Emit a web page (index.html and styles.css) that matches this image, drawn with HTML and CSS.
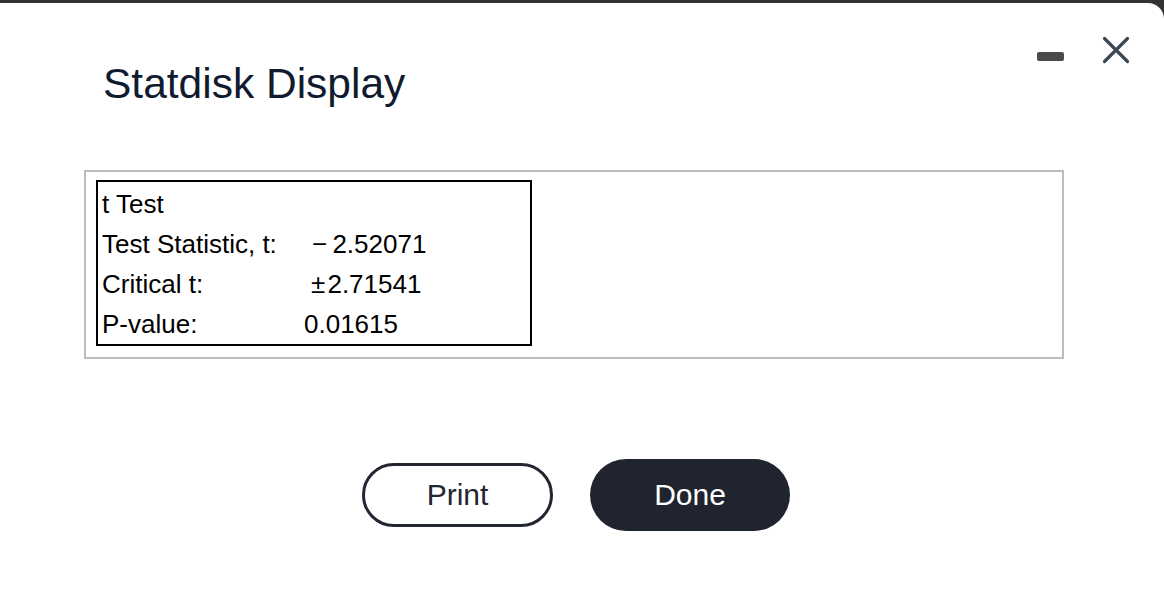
FILE: index.html
```html
<!DOCTYPE html>
<html>
<head>
<meta charset="utf-8">
<title>Statdisk Display</title>
<link rel="stylesheet" href="styles.css">
</head>
<body>
<div class="dialog">
  <div class="header">
    <h1 class="title">Statdisk Display</h1>
    <div class="controls">
      <span class="minimize"></span>
      <svg class="close" width="28" height="28" viewBox="0 0 28 28" aria-label="Close">
        <path d="M2.5 2.5 L25.5 25.5 M25.5 2.5 L2.5 25.5" stroke="#3b4756" stroke-width="3.2" stroke-linecap="round" fill="none"/>
      </svg>
    </div>
  </div>
  <div class="output">
    <div class="results">
      <div class="row"><span class="label">t Test</span><span class="value"></span></div>
      <div class="row"><span class="label">Test Statistic, t:</span><span class="value neg">−&#8201;2.52071</span></div>
      <div class="row"><span class="label">Critical t:</span><span class="value pm">±&#8202;2.71541</span></div>
      <div class="row"><span class="label">P-value:</span><span class="value">0.01615</span></div>
    </div>
  </div>
  <div class="footer">
    <button class="btn btn-outline">Print</button>
    <button class="btn btn-solid">Done</button>
  </div>
</div>
</body>
</html>
```

FILE: styles.css
```css
html, body {
  margin: 0;
  padding: 0;
  height: 100%;
}
body {
  background: #333333;
  font-family: "Liberation Sans", Arial, sans-serif;
  overflow: hidden;
}
.dialog {
  margin-top: 3px;
  height: 593px;
  background: #ffffff;
  border-top-right-radius: 16px;
  display: flex;
  flex-direction: column;
}
.header {
  display: flex;
  justify-content: space-between;
  align-items: flex-start;
  padding: 33px 34px 0 103px;
}
.title {
  margin: 24px 0 0 0;
  font-size: 42.5px;
  line-height: 48px;
  font-weight: normal;
  color: #111b2f;
}
.controls {
  display: flex;
  align-items: flex-start;
  gap: 38px;
}
.minimize {
  display: block;
  width: 27px;
  height: 9px;
  margin-top: 16px;
  background: #4a4a4a;
  border-radius: 2px;
}
.close {
  display: block;
}
.output {
  margin: 62px 0 0 84px;
  width: 980px;
  height: 189px;
  box-sizing: border-box;
  border: 2px solid #bdbdbd;
  padding: 8px 10px;
}
.results {
  width: 436px;
  height: 166px;
  box-sizing: border-box;
  border: 2px solid #000000;
  padding: 2px 4px;
  color: #000000;
  font-size: 26px;
}
.row {
  display: grid;
  grid-template-columns: 202px auto;
  height: 40px;
  line-height: 40px;
  white-space: nowrap;
}
.value.neg {
  padding-left: 8px;
}
.value.pm {
  padding-left: 7px;
}
.footer {
  margin-top: 100px;
  display: flex;
  justify-content: center;
  align-items: center;
  gap: 37px;
  padding-right: 12px;
}
.btn {
  font-family: "Liberation Sans", Arial, sans-serif;
  font-size: 30px;
  box-sizing: border-box;
  padding: 0;
  cursor: pointer;
}
.btn-outline {
  width: 191px;
  height: 64px;
  border: 3px solid #222631;
  border-radius: 32px;
  background: #ffffff;
  color: #222631;
}
.btn-solid {
  width: 200px;
  height: 72px;
  border: none;
  border-radius: 36px;
  background: #20242f;
  color: #ffffff;
}
```
